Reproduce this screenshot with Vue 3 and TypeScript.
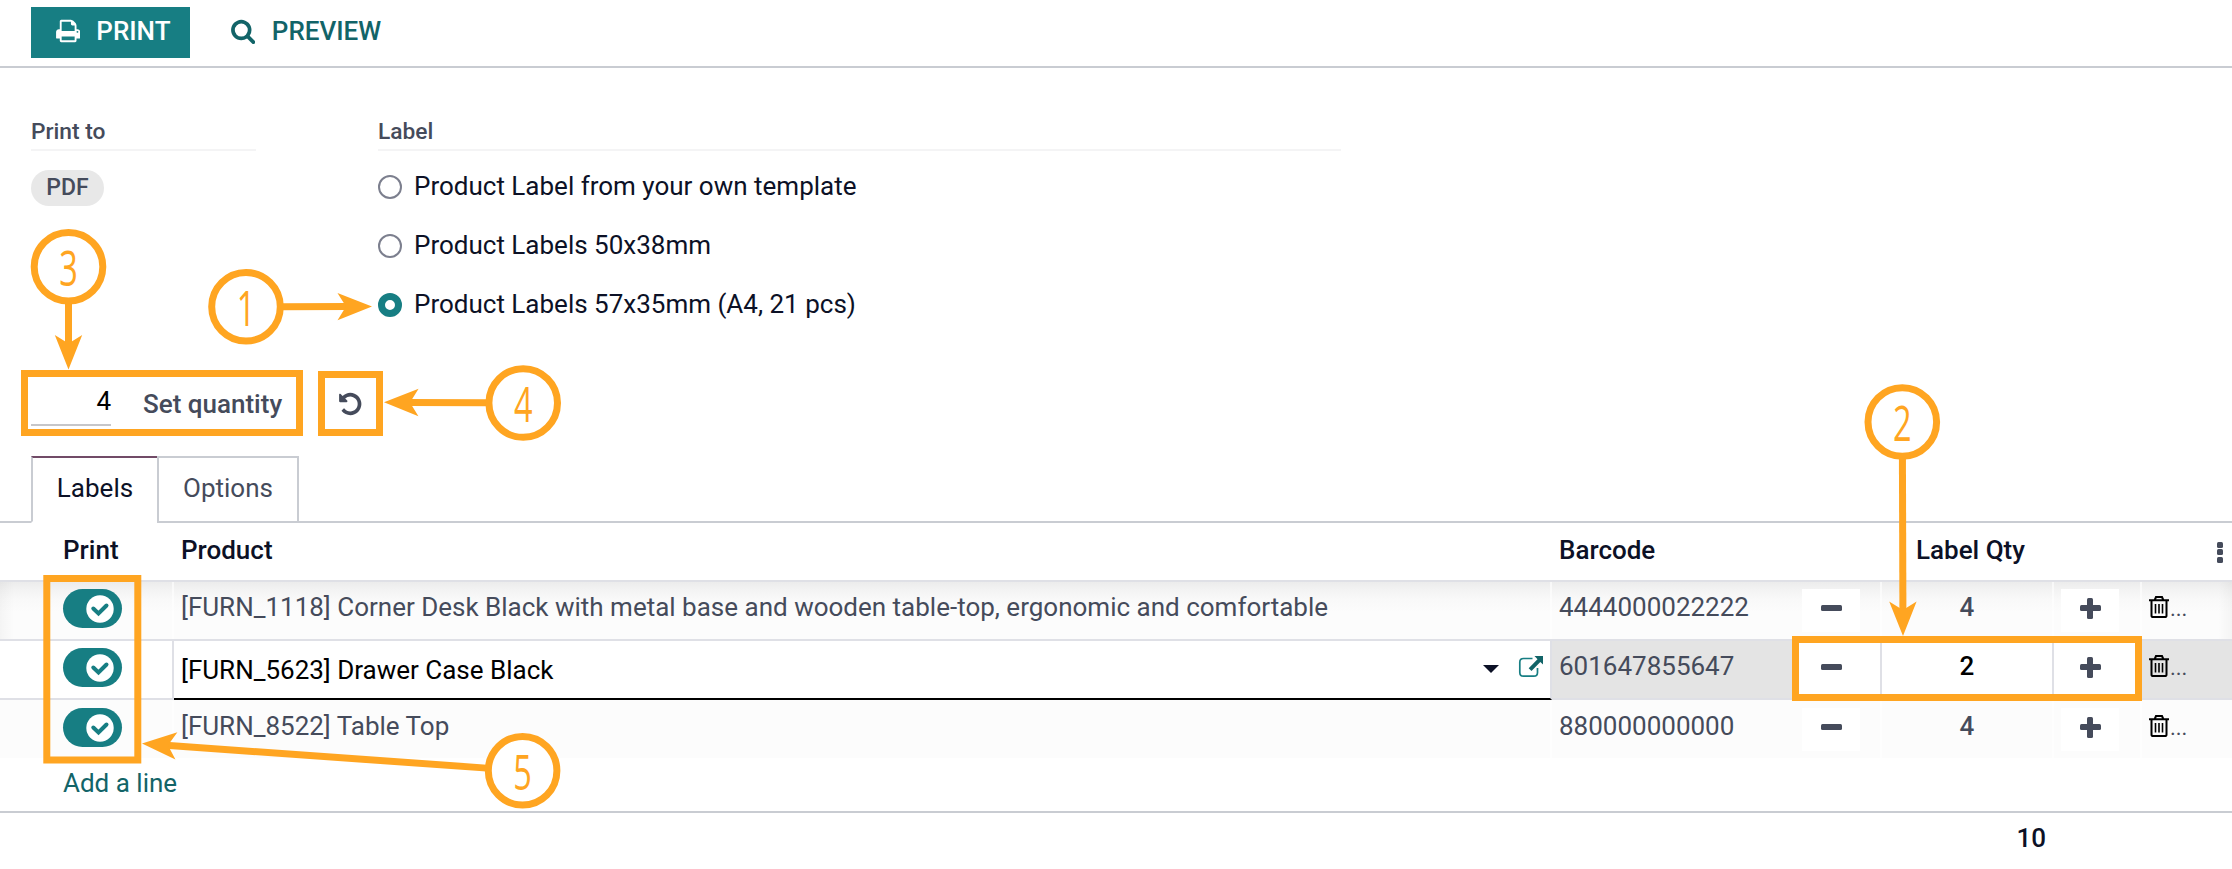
<script setup lang="ts">
interface Row {
  name: string
  barcode: string
  qty: number
  active: boolean
}
const rows: Row[] = [
  { name: '[FURN_1118] Corner Desk Black with metal base and wooden table-top, ergonomic and comfortable', barcode: '4444000022222', qty: 4, active: false },
  { name: '[FURN_5623] Drawer Case Black', barcode: '601647855647', qty: 2, active: true },
  { name: '[FURN_8522] Table Top', barcode: '880000000000', qty: 4, active: false },
]
const formats = [
  { label: 'Product Label from your own template', on: false },
  { label: 'Product Labels 50x38mm', on: false },
  { label: 'Product Labels 57x35mm (A4, 21 pcs)', on: true },
]
interface Note {
  n: number
  cx: number
  cy: number
  tx: number
  ty: number
}
const notes: Note[] = [
  { n: 1, cx: 246, cy: 306.8, tx: 372, ty: 306.5 },
  { n: 2, cx: 1902.3, cy: 422, tx: 1903, ty: 636 },
  { n: 3, cx: 68.5, cy: 266.8, tx: 68.5, ty: 369.5 },
  { n: 4, cx: 523.2, cy: 403, tx: 384, ty: 402.3 },
  { n: 5, cx: 522.6, cy: 770.7, tx: 142, ty: 743.5 },
]
const boxes = [
  { x: 24.5, y: 373.5, w: 275, h: 59 },
  { x: 321.5, y: 374.5, w: 58, h: 58 },
  { x: 46.8, y: 578.5, w: 91, h: 181.5 },
  { x: 1795.5, y: 639.5, w: 343, h: 58 },
]
const length = (a: Note) => Math.hypot(a.tx - a.cx, a.ty - a.cy)
const angle = (a: Note) => (Math.atan2(a.ty - a.cy, a.tx - a.cx) * 180) / Math.PI
</script>

<template>
  <div class="page">
    <header class="bar">
      <button class="btn primary">
        <svg class="i-print" viewBox="0 0 1664 1792"><path d="M384 1536h896v-256H384v256zm0-640h896V512h-160q-40 0-68-28t-28-68V256H384v640zm1152 64q0-26-19-45t-45-19-45 19-19 45 19 45 45 19 45-19 19-45zm128 0v416q0 13-9.500 22.500t-22.500 9.500h-224v160q0 40-28 68t-68 28H352q-40 0-68-28t-28-68v-160H32q-13 0-22.500-9.500T0 1376V960q0-79 56.500-135.500T192 768h64V224q0-40 28-68t68-28h672q40 0 88 20t76 48l152 152q28 28 48 76t20 88v256h64q79 0 135.500 56.500T1664 960z" /></svg>
        <span>PRINT</span>
      </button>
      <button class="btn link">
        <svg class="i-search" viewBox="0 0 1664 1792"><path d="M1152 832q0-185-131.500-316.500T704 384 387.500 515.500 256 832t131.500 316.500T704 1280t316.500-131.500T1152 832zm512 832q0 52-38 90t-90 38q-54 0-90-38l-343-342q-179 124-399 124-143 0-273.500-55.500t-225-150-150-225T0 832t55.500-273.500 150-225 225-150T704 128t273.500 55.500 225 150 150 225T1408 832q0 220-124 399l343 343q37 37 37 90z" /></svg>
        <span>PREVIEW</span>
      </button>
    </header>

    <section class="fields">
      <div class="col-a">
        <div class="cap">Print to</div>
        <span class="pill">PDF</span>
      </div>
      <div class="col-b">
        <div class="cap">Label</div>
        <div v-for="f in formats" :key="f.label" class="opt">
          <span class="radio" :class="{ on: f.on }"></span>
          <span>{{ f.label }}</span>
        </div>
      </div>
    </section>

    <section class="setqty">
      <div class="qinput">4</div>
      <span class="setlabel">Set quantity</span>
      <svg class="i-undo" viewBox="0 0 1536 1792"><path d="M1536 896q0 156-61 298t-164 245-245 164-298 61q-172 0-327-72.500T177 1387q-7-10-6.500-22.500t8.500-20.500l137-138q10-9 25-9 16 2 23 12 73 95 179 147t225 52q104 0 198.500-40.500T1130 1258t109.500-163.500T1280 896t-40.500-198.500T1130 534 966.500 424.500 768 384q-98 0-188 35.500T420 521l137 138q31 30 14 69-17 40-59 40H64q-26 0-45-19T0 704V256q0-42 40-59 39-17 69 14l130 129q107-101 244.500-156.500T768 128q156 0 298 61t245 164 164 245 61 298z" /></svg>
    </section>

    <nav class="tabs">
      <div class="tab current">Labels</div>
      <div class="tab other">Options</div>
    </nav>

    <div class="grid head">
      <div class="c-print">Print</div>
      <div class="c-product">Product</div>
      <div class="c-barcode">Barcode</div>
      <div class="c-qtyhead">Label Qty</div>
      <div class="c-more"><i></i><i></i><i></i></div>
    </div>

    <div class="body">
      <div v-for="r in rows" :key="r.barcode" class="grid row" :class="{ active: r.active }">
        <div class="c-print">
          <span class="toggle">
            <svg viewBox="0 0 28 28"><circle cx="14" cy="14" r="13.700" fill="#fff" /><path d="M7.300 13.500l5.200 5 8-8" fill="none" stroke="#177e83" stroke-width="4" stroke-linecap="round" /></svg>
          </span>
        </div>
        <div class="c-product">
          <span class="name">{{ r.name }}</span>
          <template v-if="r.active">
            <i class="caret"></i>
            <svg class="i-ext" viewBox="0 0 24 22"><path d="M13.500 2.500H4.500Q.8 2.500.8 6.200v10.300Q.8 20.200 4.500 20.200h10.300Q18.500 20.200 18.500 16.500V12" fill="none" stroke="#177e83" stroke-width="1.700" /><path d="M15.500 0H24v8.500l-2.700-2.500-8.800 9-2.800-2.800 8.800-9z" fill="#126468" /></svg>
          </template>
        </div>
        <div class="c-barcode">{{ r.barcode }}</div>
        <div class="c-minus"><span class="step"><i class="minus"></i></span></div>
        <div class="c-qty">{{ r.qty }}</div>
        <div class="c-plus"><span class="step"><i class="plus"></i></span></div>
        <div class="c-trash">
          <svg class="i-trash" viewBox="0 0 20 22"><g fill="none" stroke="#000" stroke-width="2"><path d="M0 4.200h20M5.700 4L7 1h6l1.300 3M2.500 4.500V19.500q0 1.600 1.700 1.600h11.600q1.700 0 1.700-1.600V4.500" /><path d="M6.500 8v9.500M10 8v9.500M13.500 8v9.500" stroke-width="1.600" /></g></svg>
          <span>...</span>
        </div>
      </div>
    </div>

    <div class="add"><a>Add a line</a></div>
    <footer class="total">10</footer>

    <svg class="notes" width="2232" height="869" viewBox="0 0 2232 869">
      <rect v-for="(b, i) in boxes" :key="i" :x="b.x" :y="b.y" :width="b.w" :height="b.h" class="frame" />
      <g v-for="a in notes" :key="a.n">
        <g :transform="`translate(${a.cx} ${a.cy}) rotate(${angle(a)})`">
          <path :d="`M36 0H${length(a) - 24}`" class="shaft" />
          <path :d="`M${length(a)} 0l-34.500 -13.700 8.500 13.700 -8.500 13.700z`" class="tip" />
        </g>
        <circle :cx="a.cx" :cy="a.cy" r="34.300" class="ring" />
        <text :transform="`translate(${a.cx} ${a.cy + 19}) scale(.65 1)`" class="num">{{ a.n }}</text>
      </g>
    </svg>
  </div>
</template>

<style>
body { margin: 0; background: #fff; }
</style>

<style scoped>
.page { position: relative; width: 2232px; height: 869px; overflow: hidden; background: #fff; font: 400 26px/39px Roboto, sans-serif; color: #0c1126; box-sizing: border-box; }
.page * { box-sizing: border-box; }
.bar { height: 68px; border-bottom: 2px solid #c9ccd2; padding: 7px 0 0 31px; display: flex; align-items: flex-start; }
.btn { height: 51px; border: 0; padding: 0; background: none; font: 500 26px/39px Roboto, sans-serif; display: flex; align-items: center; }
.btn span { position: relative; top: -1px; }
.primary { width: 159px; background: #177e83; color: #fff; padding-left: 25px; gap: 16px; }
.link { color: #126468; margin-left: 41px; gap: 16.500px; }
.i-print, .i-search { width: 24.300px; height: 26px; fill: currentColor; position: relative; top: -2px; }
.fields { display: flex; padding: 45px 0 0 31px; height: 257px; }
.col-a { width: 225px; }
.col-b { width: 963px; margin-left: 122px; }
.cap { font-weight: 500; font-size: 22.750px; line-height: 37px; height: 38px; border-bottom: 2px solid #f4f4f5; color: #454b5b; }
.pill { display: block; width: 73px; height: 36px; margin-top: 19px; border-radius: 18px; background: #e8e8e8; color: #454b5b; font-weight: 500; font-size: 23px; line-height: 36px; text-align: center; }
.opt { display: flex; align-items: center; height: 59px; }
.cap + .opt { margin-top: 6px; }
.radio { width: 24px; height: 24px; border-radius: 50%; border: 2px solid #7c7f8e; margin-right: 12px; position: relative; top: .5px; }
.radio.on { border: 7.500px solid #177e83; }
.setqty { display: flex; height: 131px; padding: 51px 0 0 31px; }
.qinput { width: 80px; height: 50px; border-bottom: 2px solid #c6c6c9; text-align: right; line-height: 50px; color: #000; }
.setlabel { margin-left: 32px; font-weight: 500; color: #454b5b; line-height: 56px; }
.i-undo { width: 22.500px; height: 26px; margin: 15px 0 0 57px; fill: #454b5b; }
.tabs { display: flex; height: 67px; padding-left: 31px; background: linear-gradient(#c9ccd2, #c9ccd2) bottom/100% 2px no-repeat; }
.tab { height: 67px; line-height: 60px; text-align: center; border: 2px solid #c9ccd2; }
.current { width: 126px; border-top-color: #714b67; border-right: 0; border-bottom-color: #fff; background: #fff; }
.other { width: 142px; color: #454b5b; }
.grid { display: grid; grid-template-columns: 174px 1378px 241px 89px 172px 88px 90px; }
.head { height: 59px; line-height: 54px; font-weight: 500; border-bottom: 2px solid #dfe0e6; }
.c-print { padding-left: 63px; }
.c-product { padding-left: 7px; }
.c-barcode { padding-left: 7px; }
.head .c-qtyhead { grid-column: 4 / 7; text-align: right; padding-right: 117px; }
.c-more { display: flex; flex-direction: column; align-items: flex-end; gap: 1.500px; padding: 18.500px 9px 0 0; }
.c-more i { width: 6px; height: 6px; border-radius: 1.500px; background: #454b5b; }
.row { height: 59px; color: #454b5b; line-height: 51px; background: #fcfcfc; }
.row:first-child {
  border-bottom: 2px solid #dfe0e6;
  background:
    linear-gradient(90deg, rgba(0, 0, 0, .03), transparent 14px),
    linear-gradient(270deg, rgba(0, 0, 0, .03), transparent 14px),
    linear-gradient(#ececec, #f4f4f4 9px, #f9f9f9 18px, #fcfcfc 30px);
}
.row:last-child { height: 58px; padding-top: 1px; }
.row > div { border-right: 2px solid rgba(255, 255, 255, .6); }
.row > .c-barcode, .row > .c-trash { border-right: 0; }
.row.active { background: #e4e4e4; }
.row.active > div { border-right-color: #dfe0e6; }
.active .c-print, .active .c-barcode, .active .c-trash { border-bottom: 2px solid #dfe0e6; }
.active .c-print, .active .c-minus, .active .c-qty, .active .c-plus { background: #fff; }
.row.active > .c-product { display: flex; align-items: center; background: #fff; color: #000; border-bottom: 2px solid #000; }
.active .name { flex: 1; position: relative; top: .5px; }
.toggle { display: flex; justify-content: flex-end; align-items: center; width: 59px; height: 39px; margin-top: 7px; border-radius: 20px; background: #177e83; padding-right: 8px; }
.toggle svg { width: 28px; height: 28px; }
.caret { border: 8px solid transparent; border-top-color: #0c1126; border-bottom: 0; margin: -2px 20px 0 0; }
.i-ext { width: 24px; height: 22px; overflow: visible; margin: -6px 7px 0 0; }
.c-minus { padding-left: 9px; }
.c-plus { padding-left: 7px; }
.step { display: flex; align-items: center; justify-content: center; width: 58px; height: 43px; margin-top: 7px; background: #fff; }
.minus, .plus { width: 21px; height: 6px; border-radius: 1.500px; background: #454b5b; position: relative; top: -2.500px; }
.plus::after { content: ''; position: absolute; left: 7.500px; top: -7.500px; width: 6px; height: 21px; border-radius: 1.500px; background: #454b5b; }
.c-qty { text-align: center; font-weight: 500; }
.active .c-qty { color: #000; }
.c-trash { display: flex; padding-left: 7px; }
.c-trash span { font-size: 22px; position: relative; top: 1px; }
.i-trash { width: 20px; height: 22px; margin: 13.500px 1px 0 0; overflow: visible; }
.add { height: 55px; border-bottom: 2px solid #c9ccd2; padding-left: 63px; line-height: 50px; color: #126468; }
.total { height: 56px; line-height: 50px; font-weight: 500; padding-right: 186px; text-align: right; }
.notes { position: absolute; left: 0; top: 0; }
.frame { fill: none; stroke: #ffa521; stroke-width: 7; }
.shaft { stroke: #ffa521; stroke-width: 7; fill: none; }
.tip { fill: #ffa521; }
.ring { fill: #fff; stroke: #ffa521; stroke-width: 7; }
.num { font: 500 50px "Open Sans", sans-serif; fill: #ffa521; text-anchor: middle; }
</style>
